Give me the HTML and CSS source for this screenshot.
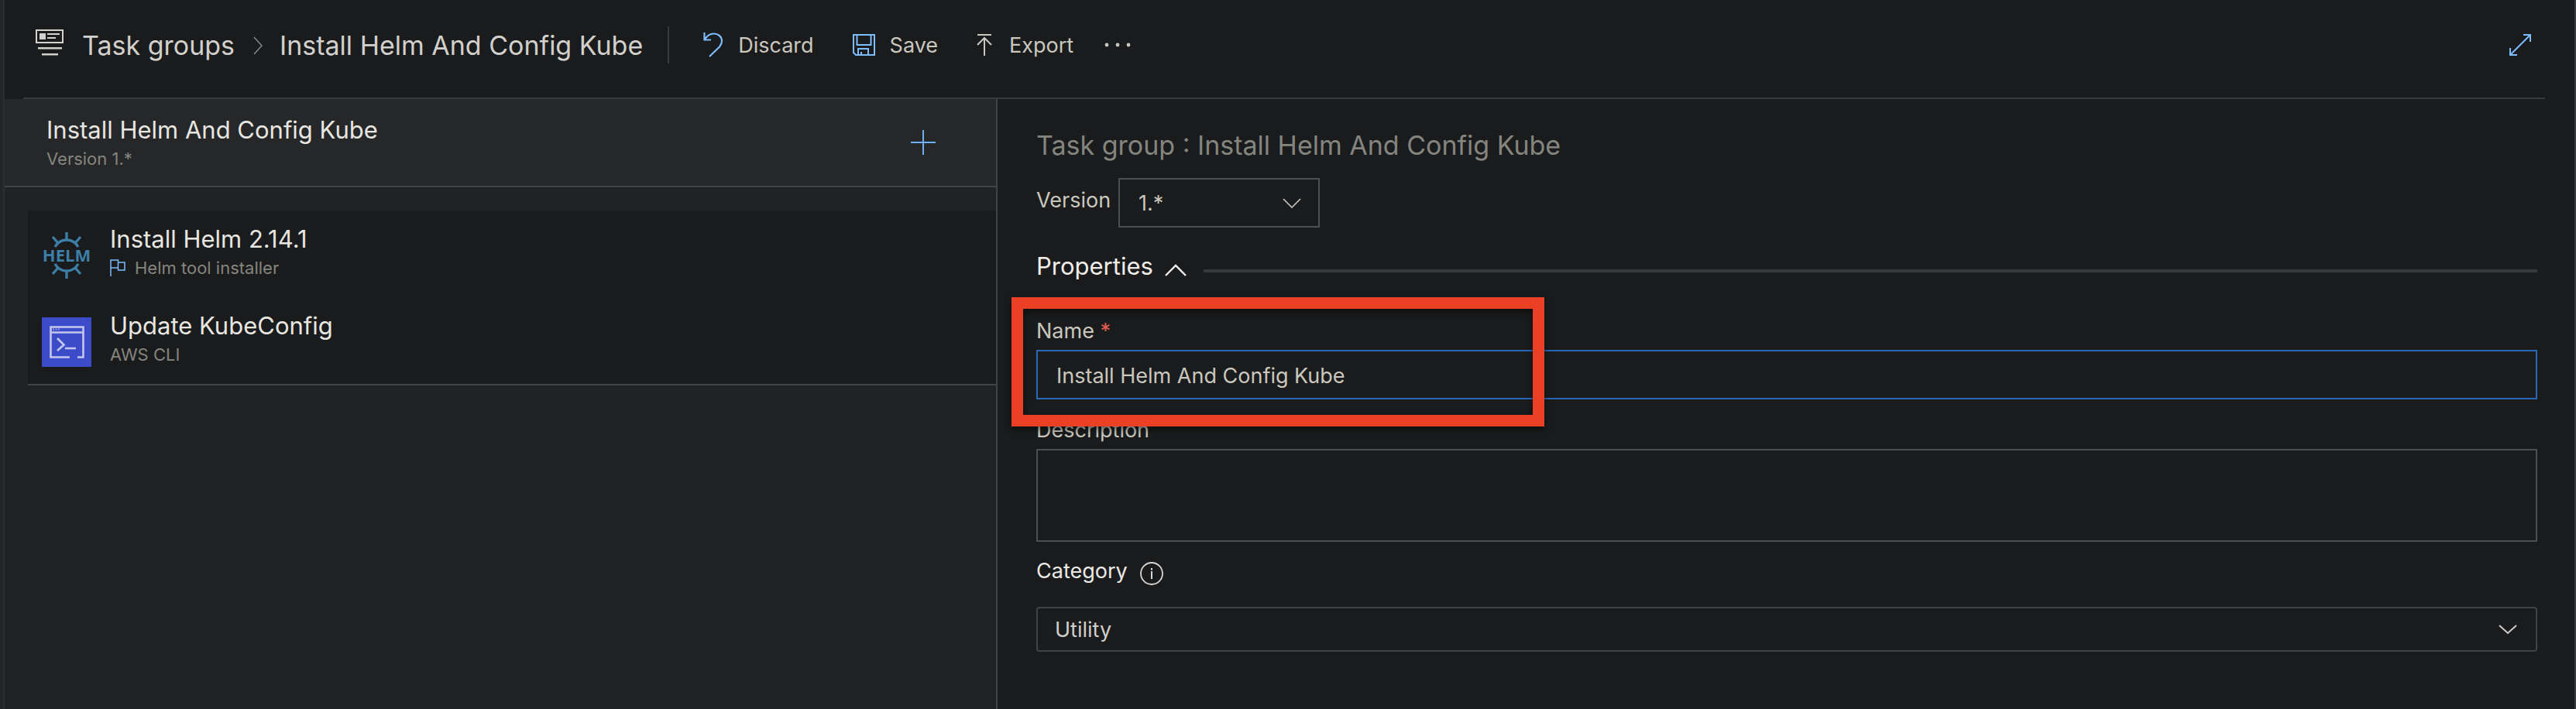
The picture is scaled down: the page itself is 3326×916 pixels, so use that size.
FILE: index.html
```html
<!DOCTYPE html>
<html lang="en">
<head>
<meta charset="utf-8">
<title>Install Helm And Config Kube - Task groups</title>
<link rel="stylesheet" href="styles.css">
</head>
<body>
<div class="app">
  <header class="topbar">
    <svg class="group-icon" width="36" height="34" viewBox="0 0 36 34" aria-hidden="true">
      <rect x="1" y="1" width="34" height="16" fill="none" stroke="currentColor" stroke-width="2"/>
      <path d="M5 5h8v8H5zM15 5h16v2H15zM15 10h11v2H15zM3 23h31v2.500H3zM8 31h21v2.500H8z" fill="currentColor"/>
    </svg>
    <nav class="crumbs" aria-label="Breadcrumb">
      <a class="crumb" href="#">Task groups</a>
      <svg class="crumb-sep" width="12" height="24" viewBox="0 0 12 24" aria-hidden="true"><path d="M1 1l10 11L1 23" fill="none" stroke="currentColor" stroke-width="1.500"/></svg>
      <h1 class="crumb">Install Helm And Config Kube</h1>
    </nav>
    <div class="toolbar">
      <button class="tool discard" type="button">
        <svg class="blue" width="26" height="32" viewBox="0 0 26 32" aria-hidden="true"><path d="M1.500 0v9.500H10M2 9C5 4 9 1.500 13.500 1.500c6 0 10.500 4 10.500 9.500 0 3-1 5-3 7.500L8 31" fill="none" stroke="currentColor" stroke-width="2.200"/></svg>
        <span class="tool-text">Discard</span>
      </button>
      <button class="tool save" type="button">
        <svg class="blue" width="29" height="28" viewBox="0 0 29 28" aria-hidden="true"><path d="M1 1h27v26H4l-3-3zM5.500 1v13h18V1M7 27v-8h13v8M11 27v-4" fill="none" stroke="currentColor" stroke-width="2"/></svg>
        <span class="tool-text">Save</span>
      </button>
      <button class="tool export" type="button">
        <svg width="20" height="28" viewBox="0 0 20 28" aria-hidden="true"><path d="M1 1h18M10 28V5M1 14l9-9 9 9" fill="none" stroke="currentColor" stroke-width="2"/></svg>
        <span class="tool-text">Export</span>
      </button>
      <button class="tool more" type="button" aria-label="More actions">
        <svg width="34" height="6" viewBox="0 0 34 6" aria-hidden="true"><g fill="currentColor"><circle cx="3" cy="3" r="2.400"/><circle cx="17" cy="3" r="2.400"/><circle cx="31" cy="3" r="2.400"/></g></svg>
      </button>
    </div>
    <button class="expand" type="button" aria-label="Full screen">
      <svg width="28" height="28" viewBox="0 0 28 28" aria-hidden="true"><path d="M18 1h9v9M27 1L1 27M1 18v9h9" fill="none" stroke="currentColor" stroke-width="2"/></svg>
    </button>
  </header>

  <div class="body">
    <aside class="side">
      <div class="side-head">
        <div>
          <h2 class="item-title">Install Helm And Config Kube</h2>
          <p class="item-sub">Version 1.*</p>
        </div>
        <button class="add" type="button" aria-label="Add a task">
          <svg width="32" height="32" viewBox="0 0 32 32" aria-hidden="true"><path d="M16 0v32M0 16h32" stroke="currentColor" stroke-width="2"/></svg>
        </button>
      </div>
      <ul class="tasks">
        <li class="task">
          <svg class="task-icon helm" width="64" height="64" viewBox="0 0 64 64" aria-hidden="true">
            <g fill="none" stroke="currentColor" stroke-width="3.400">
              <path d="M17 21C21 14 26 12 32 12s11 2 15 9M17 43c4 7 9 9 15 9s11-2 15-9"/>
              <path d="M32 2v10M32 52v10M14 8l7 8M50 8l-7 8M14 56l7-8M50 56l-7-8"/>
            </g>
            <text class="helm-text" x="32" y="40" text-anchor="middle" fill="currentColor">HELM</text>
          </svg>
          <div class="task-text">
            <h3 class="item-title">Install Helm 2.14.1</h3>
            <p class="item-sub">
              <svg class="flag blue" width="20" height="22" viewBox="0 0 20 22" aria-hidden="true"><path d="M1 22V1h9.500v10H1M10.500 4H19v10h-8.500v-3" fill="none" stroke="currentColor" stroke-width="1.500"/></svg>
              Helm tool installer
            </p>
          </div>
        </li>
        <li class="task">
          <svg class="task-icon" width="64" height="64" viewBox="0 0 64 64" aria-hidden="true">
            <rect width="64" height="64" fill="#3c4cc8"/>
            <g fill="none" stroke="#c3c6ee" stroke-width="2.600">
              <path d="M36 51.500H11.500v-39h42v39H46M11.500 19.500h42"/>
              <path d="M20 27l8.500 8.500L20 43M30 40h14"/>
              <path d="M14 15.500h9" stroke-width="2" stroke-dasharray="2 1.500" opacity=".6"/>
            </g>
          </svg>
          <div class="task-text">
            <h3 class="item-title">Update KubeConfig</h3>
            <p class="item-sub">AWS CLI</p>
          </div>
        </li>
      </ul>
    </aside>

    <main class="panel">
      <h2 class="panel-title">Task group : Install Helm And Config Kube</h2>
      <div class="version">
        <label for="version">Version</label>
        <div class="pick version-pick">
          <select id="version" class="box"><option>1.*</option></select>
          <svg class="pick-arrow" width="24" height="13" viewBox="0 0 24 13" aria-hidden="true"><path d="M1 1l11 11L23 1" fill="none" stroke="currentColor" stroke-width="1.600"/></svg>
        </div>
      </div>
      <div class="section">
        <button class="section-toggle" type="button" aria-expanded="true">Properties
          <svg width="28" height="16" viewBox="0 0 28 16" aria-hidden="true"><path d="M1 15L14 2l13 13" fill="none" stroke="currentColor" stroke-width="2.400"/></svg>
        </button>
        <hr class="rule">
      </div>
      <div class="field name-field">
        <label class="label" for="name">Name <span class="req">*</span></label>
        <input id="name" class="box" type="text" value="Install Helm And Config Kube">
        <div class="highlight"></div>
      </div>
      <div class="field desc-field">
        <label class="label" for="desc">Description</label>
        <textarea id="desc" class="box"></textarea>
      </div>
      <div class="field cat-field">
        <div class="label-row">
          <label class="label bright" for="category">Category</label>
          <svg width="30" height="30" viewBox="0 0 30 30" aria-hidden="true"><circle cx="15" cy="15" r="14" fill="none" stroke="currentColor" stroke-width="1.800"/><path d="M14 8h2v2.500h-2zM14 12h2v10h-2z" fill="currentColor"/></svg>
        </div>
        <div class="pick">
          <select id="category" class="box"><option>Utility</option></select>
          <svg class="pick-arrow" width="28" height="13" viewBox="0 0 24 13" aria-hidden="true"><path d="M1 1l11 10L23 1" fill="none" stroke="currentColor" stroke-width="2"/></svg>
        </div>
      </div>
    </main>
  </div>
</div>
</body>
</html>
```
FILE: styles.css
```css
* { box-sizing: border-box; }

body {
  margin: 0;
  background: #1a1b1c;
  color: #cac7bf;
  font: 27px/32px Inter, "Liberation Sans", sans-serif;
}

h1, h2, h3, p, ul { margin: 0; padding: 0; font-weight: 400; }
ul { list-style: none; }
svg { display: block; flex: none; }
a { color: inherit; text-decoration: none; }
button { margin: 0; padding: 0; border: 0; background: none; color: inherit; font: inherit; cursor: pointer; }
.blue { color: #7cbcff; }

.app {
  display: flex;
  flex-direction: column;
  min-height: 100vh;
  padding-left: 4px;
  border-right: 2px solid #38393b;
  background: linear-gradient(90deg, #242527 4px, #2d2e30 4px, #2d2e30 6px, #1a1b1c 6px);
}

/* Top bar */
.topbar {
  display: flex;
  align-items: center;
  height: 128px;
  margin: 0 38px 0 26px;
  padding: 0 18px 16px 16px;
  border-bottom: 2px solid #38393b;
}
.group-icon { color: #d2d0cc; }
.crumbs {
  display: flex;
  align-items: center;
  margin-left: 24px;
  padding-top: 8px;
  color: #d2d0cc;
}
.crumb { font-size: 34px; line-height: 44px; white-space: nowrap; }
.crumb-sep { margin: 0 22px 0 24px; color: #85868a; }
.toolbar {
  display: flex;
  align-items: center;
  height: 48px;
  margin: 6px 0 0 32px;
  padding-left: 44px;
  border-left: 2px solid #38393b;
}
.tool { display: flex; align-items: center; }
.tool svg { margin-right: 19px; }
.tool-text { padding-top: 2px; }
.save { margin-left: 50px; }
.export { margin-left: 50px; }
.export svg { margin-right: 22px; }
.more { margin-left: 40px; }
.expand { margin: 6px 0 0 auto; color: #7cbcff; }

/* Task list */
.body { display: flex; flex: 1; margin-left: 2px; }
.side {
  flex: none;
  width: 1282px;
  border-right: 2px solid #424345;
  background: #212224;
}
.side-head {
  display: flex;
  justify-content: space-between;
  align-items: center;
  height: 114px;
  padding: 0 78px 0 54px;
  border-bottom: 2px solid #424345;
  background: #252729;
}
.side-head > div { padding-top: 2px; }
.add { color: #6fb0f5; }
.item-title { color: #e8e6e1; font-size: 31px; line-height: 40px; }
.item-sub {
  display: flex;
  align-items: center;
  color: #85857f;
  font-size: 22px;
  line-height: 34px;
}
.flag { margin-right: 12px; }
.tasks {
  margin: 30px 0 0 30px;
  border-bottom: 2px solid #424345;
  background: #1a1b1c;
}
.task {
  display: flex;
  align-items: center;
  gap: 24px;
  height: 112px;
  padding: 4px 18px 0;
}
.task-text { padding-bottom: 8px; }
.helm { color: #3c7ea6; }
.helm-text { font: 700 22px/22px "Open Sans", sans-serif; }

/* Properties panel */
.panel {
  flex: 1;
  min-width: 0;
  padding: 38px 48px 40px 50px;
}
.panel-title { color: #85857f; font-size: 34px; line-height: 44px; }
.version { display: flex; align-items: center; gap: 10px; margin-top: 20px; }
.version label { padding-bottom: 6px; }
.version-pick { width: 260px; }
.version-pick .box { height: 64px; }
.pick { position: relative; }
.pick-arrow { position: absolute; right: 24px; top: 50%; margin-top: -6px; pointer-events: none; }
.box {
  display: block;
  width: 100%;
  margin: 0;
  padding: 2px 24px 0;
  border: 2px solid #4b5152;
  border-radius: 0;
  outline: 0;
  appearance: none;
  resize: none;
  background: #1a1b1c;
  color: inherit;
  font: inherit;
}
.section { display: flex; align-items: center; gap: 22px; margin-top: 30px; }
.section-toggle {
  display: flex;
  align-items: center;
  gap: 15px;
  color: #f0eeea;
  font-size: 31px;
  line-height: 40px;
}
.section-toggle svg { margin-top: 10px; }
.rule { flex: 1; height: 4px; margin: 12px 0 0; border: 0; background: #37393b; }
.field .label { display: block; }
.name-field { position: relative; margin-top: 46px; }
.name-field .label, .desc-field .label { padding-top: 2px; }
.name-field .box { height: 64px; margin-top: 8px; border-color: #2769b8; }
.req { color: #e85b52; }
.highlight {
  position: absolute;
  top: -26px;
  left: -32px;
  width: 688px;
  height: 167px;
  border: 15px solid #ec4026;
  box-shadow: 0 4px 8px rgba(0, 0, 0, .5), inset 0 4px 8px rgba(0, 0, 0, .5);
  pointer-events: none;
}
.desc-field { margin-top: 22px; }
.desc-field .box { height: 120px; margin-top: 8px; }
.cat-field { margin-top: 20px; }
.label-row { display: flex; align-items: center; gap: 16px; height: 36px; color: #d8d6d2; }
.bright { color: #eceae6; }
.label-row svg { margin-top: 6px; }
.cat-field .pick { margin-top: 28px; color: #d0cecb; }
.cat-field .box { height: 58px; padding: 2px 22px 0; border-color: #424345; border-radius: 4px; }
```
